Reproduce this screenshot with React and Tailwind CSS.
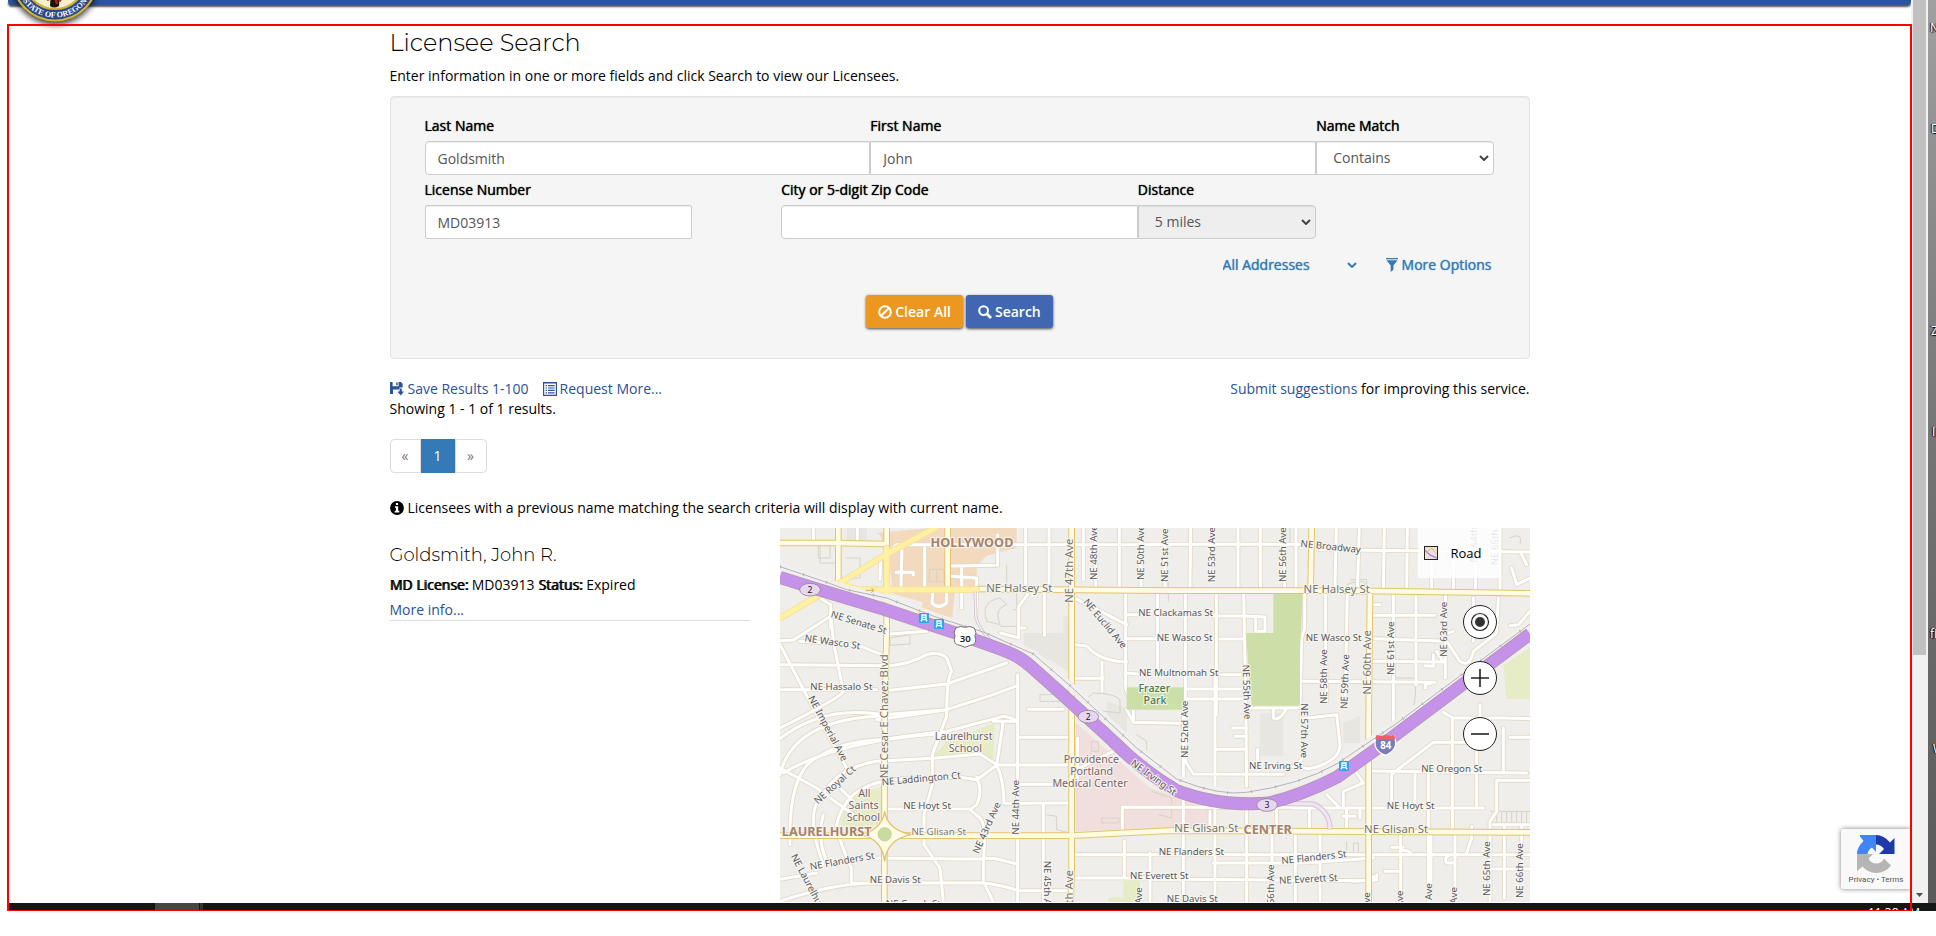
import React from "react";

const FONT = "font-['Open_Sans','Noto_Sans',sans-serif]";

/* ---------- icons ---------- */
const Chevron = ({ className }) => (
  <svg viewBox="0 0 10 6" className={className} fill="none" stroke="currentColor" strokeWidth="2">
    <path d="M1 1 L5 5 L9 1" />
  </svg>
);
const BanIcon = () => (
  <svg viewBox="0 0 14 14" className="h-[14px] w-[14px]" fill="none" stroke="currentColor" strokeWidth="2">
    <circle cx="7" cy="7" r="5.8" />
    <path d="M3.2 10.8 L10.8 3.2" />
  </svg>
);
const SearchIcon = () => (
  <svg viewBox="0 0 14 14" className="h-[14px] w-[14px]" fill="none" stroke="currentColor">
    <circle cx="5.6" cy="5.6" r="4.4" strokeWidth="2" />
    <path d="M9 9 L13 13" strokeWidth="2.8" />
  </svg>
);
const FilterIcon = () => (
  <svg viewBox="0 0 14 14" className="h-[14px] w-[14px]" fill="currentColor">
    <path d="M1 0h12v1.3H1zM1.4 2.2h11.2L8.4 7.4v4.4L5.7 14V7.4z" />
  </svg>
);
const SaveIcon = () => (
  <svg viewBox="0 0 14 14" className="h-[14px] w-[14px]" fill="currentColor">
    <path fillRule="evenodd" d="M0 0h2.6v4.2h6V0H11l1.6 1.8v3.6H9.4v2H3v4.2H0zM6.2 .6h1.5v2.6H6.2z" />
    <path d="M9.6 6.4h2.2v3.2H14L10.7 13.4 7.4 9.6h2.2z" />
    <path d="M0 11h3v1H0z" />
  </svg>
);
const ListIcon = () => (
  <svg viewBox="0 0 14 14" className="h-[14px] w-[14px]" fill="currentColor">
    <path fillRule="evenodd" d="M0 0h14v14H0zM1.2 1.6v11.2h11.6V1.6z" />
    <path d="M2.6 3h1.4v1.2H2.6zM5 3h6.6v1.2H5zM2.6 5.4h1.4v1.2H2.6zM5 5.4h6.6v1.2H5zM2.6 7.8h1.4V9H2.6zM5 7.8h6.6V9H5zM2.6 10.2h1.4v1.2H2.6zM5 10.2h6.6v1.2H5z" />
  </svg>
);
const InfoIcon = () => (
  <svg viewBox="0 0 14 14" className="h-[14px] w-[14px]">
    <circle cx="7" cy="7" r="6.9" fill="#000" />
    <path fill="#fff" d="M5.9 2h2.2v2H5.9zM4.9 5.2h3.3v4.6h1.1v1.6H4.7V9.8h1.2V6.8h-1z" />
  </svg>
);

/* ---------- state seal ---------- */
const Seal = () => (
  <svg viewBox="0 0 100 110" className="absolute left-[5px] top-[-72px] h-[110px] w-[100px]">
    <defs>
      <filter id="sealShadow" x="-20%" y="-20%" width="140%" height="140%">
        <feDropShadow dx="0" dy="3" stdDeviation="3" floodColor="#000" floodOpacity="0.8" />
      </filter>
      <path id="sealArc" d="M10.5 50 A39.5 39.5 0 0 0 89.5 50" />
    </defs>
    <circle cx="50" cy="50" r="43.5" fill="#4a4a38" filter="url(#sealShadow)" />
    <circle cx="50" cy="50" r="42.5" fill="#27498a" stroke="#d3b62f" strokeWidth="2" />
    <circle cx="50" cy="50" r="31" fill="#f7efcd" stroke="#cdb23c" strokeWidth="2.2" />
    <path d="M46 64 L55 66 L54 78 Q49 81 45 78 Z" fill="#1b1512" />
    <path d="M42 72 L50 69 L56 73 M49 66 L52 76" stroke="#b3261c" strokeWidth="2.2" fill="none" />
    <text className="font-['Liberation_Serif',serif] text-[8px] font-bold" fill="#fff" textAnchor="middle">
      <textPath href="#sealArc" startOffset="50%">STATE OF OREGON</textPath>
    </text>
  </svg>
);

/* ---------- map ---------- */
const minorRoads = [
  // north-west blocks
  "M100 0V45", "M232 0V45", "M0 158L110 150L140 160", "M302 90L300 155", "M366 52L363 180", "M348 133H400V140", "M434 60V180",
  "M320 78L350 50H1170", "M653 20V112L510 114", "M510 145L590 150V180", "M545 114V240", "M590 180V240",
  "M458 195L456 225Q475 245 500 225V195", "M737 0V180L743 200L716 235V330L662 315", "M716 300H735", "M793 195V322", "M807 0V180",
  "M910 0V155", "M947 0V180", "M1018 0V180", "M1083 0V180", "M1155 0V180",
  // Laurelhurst curves
  "M120 210L152 230V300", "M0 338L40 336L152 265", "M152 250L160 340L190 490Q180 510 0 600", "M0 410L330 413Q390 408 440 380Q480 370 500 390L515 430Q500 450 500 565L457 680V770L432 860V950L480 1020L490 1122",
  "M330 318L440 310", "M60 340L230 350L310 382", "M0 485H290", "M0 350L110 560L200 720", "M330 487L500 468L680 405", "M290 575L500 545L640 500L715 472",
  "M0 632Q130 530 310 560L500 545", "M0 740Q40 570 320 563", "M10 735Q170 640 470 618L670 565Q700 570 713 581", "M0 720L110 780L220 860",
  "M30 950Q25 730 110 690Q180 640 300 635L470 613", "M130 1010Q70 850 130 800Q170 720 290 700L470 690L600 678L650 710",
  "M140 1000Q110 930 130 860", "M214 1065V1020Q170 920 170 890Q180 840 220 800Q280 750 400 752L540 748L590 755",
  "M170 770L220 820", "M590 748Q610 790 590 830L570 845L600 870Q620 890 610 1000V1060L640 1122", "M590 755L650 712L670 580", "M650 712Q670 750 672 826L870 825",
  "M320 843H570", "M650 711H870", "M713 440V1122", "M715 628H870", "M713 769H870", "M790 830V1122", "M745 544H850", "M640 580H713",
  "M0 1054L110 1035", "M280 990L540 993L640 991L713 1008", "M220 1066L600 1064Q670 1070 713 1088H870", "M0 1120Q150 1070 260 1066",
  // centre
  "M885 211L1040 290", "M885 350L920 354Q960 400 1040 402", "M885 451H970", "M966 402V490", "M1037 195V480L1060 543V583L1200 586", "M1133 195V440",
  "M1040 260H1090", "M1040 332H1140", "M1040 435L1100 440", "M1060 583L1040 545", "M893 630V750", "M893 723L1000 670",
  "M885 980H2250", "M885 1050H1110", "M1033 940V1045", "M1027 840V905", "M1027 838H1630",
  "M1132 195V420", "M1216 195V570", "M1216 572V700L1240 738L1510 739", "M1309 195V560", "M1305 440V1122", "M1391 195L1397 500L1400 775",
  "M1300 264H1390L1455 267V310H1427V270", "M1320 333H1390", "M1320 440H1390", "M1220 513H1400", "M1220 483H1400", "M1310 664H1400", "M1357 600H1400", "M1365 625H1400", "M1433 664V710",
  "M1400 540H1560L1565 330L1574 300V195", "M1480 540V570Q1500 580 1520 540", "M1565 572L1670 560L1680 650Q1680 700 1590 722L1530 715", "M1555 715L1570 680",
  "M1637 195V380L1640 520", "M1702 195L1695 530", "M1232 0L1230 180", "M1374 0V180", "M1441 0V180", "M1548 0V180", "M1514 0V180", "M1669 0L1665 180", "M1738 0L1732 190", "M1813 0L1810 190", "M1882 0L1880 190",
  "M1110 49H1560", "M1620 65L2250 72", "M1780 230H1800", "M1780 262H1965", "M1840 195V600", "M1908 205V470", "M1780 332L2000 340L2040 400Q2070 420 2080 370L2150 315L2155 210", "M1780 400L1990 402L1970 370", "M1960 380V415L1935 413", "M1570 460L1965 463L1936 470V480", "M1996 200V450", "M2020 310L1990 320",
  "M1955 100V190", "M2020 100V190", "M2086 20V190", "M2160 0V190", "M2195 120L2210 170L2250 150", "M2225 80L2240 110", "M2080 210V340", "M2190 293L2215 290L2250 250",
  // south-east
  "M1770 729L2240 735", "M1840 735L1960 643H2110", "M1990 553L2020 570H2170L2250 572", "M2100 530V640", "M2017 570V840L2018 900", "M1835 735V830", "M1905 735V840", "M1945 735V1122", "M2090 640V840", "M2170 600V735", "M2190 628H2250",
  "M1540 840H2110", "M1700 840V900", "M1690 865H1725M1740 840V870", "M1640 800L1680 840H1780", "M1690 840V790L1750 765M1750 765L1730 735", "M2250 757H2150V850L2130 880V1122", "M1290 850V905", "M1300 1005H1570L1780 990", "M1400 840V1122", "M1490 840V900", "M1588 840V900", "M1476 920V1020", "M1546 920V1122", "M1620 920V1122",
  "M1110 1053L1780 1058V1045", "M1110 975V1122", "M1210 540V1122", "M1780 980H1890Q1895 965 1860 968", "M1835 958H1870", "M1862 920V1090", "M1953 920V1080", "M2025 920V1080", "M2010 980Q1990 990 2000 1005L2020 1005", "M2075 895V930L2060 975", "M2173 895V1110", "M2225 890V940", "M2130 1023H2250", "M2140 890H2250", "M1815 1030H1860", "M1720 1060L1790 1055V1040",
].join("");

const majorRoads = [
  "M0 45H160L320 48", "M175 0V160", "M320 0L320 300L314 573L313 1122", "M503 0V180", "M875 0V1020L872 1122",
  "M590 183L1170 188H1700L2250 196", "M1595 0L1592 188", "M1770 198L1766 573V1122", "M0 923H875L1170 908L2250 913",
].join("");

const goldRoads = ["M465 0L320 78L175 168L0 270", "M160 165L240 185H590", "M320 60V250"].join("");

const buildings = [
  "M115 50h35v40h-35z", "M200 90h40v60h-70v-30", "M448 124h44v36h-44z", "M470 124v36", "M120 55v50h60v-30", "M330 330l60-10v28l-60 4z",
  "M620 280q-20-60 40-70l20 20q-40 10-20 60z", "M700 245h20v50h-60", "M780 500h60v20h-60z", "M940 495q60 0 80 20v40l-90-10q-20-30 10-50z",
  "M680 110v60l30 10v60", "M935 640h20v30h-20z", "M965 870h52v15h-52z", "M1700 170q70-30 60 30", "M1710 155h50v40", "M1900 540q10-40 5-90h-60",
  "M2190 30q40-20 30 20", "M2250 850h-120M2150 850v35M2165 850v35M2180 850v35M2195 850v35M2210 850v35M2225 850v35M2240 850v35", "M1700 940v40h20v-35h15v40",
  "M1145 160h20v60", "M1530 0v50h20v-50", "M800 860l30 5v40l40 10", "M1070 620l30 20v70", "M1115 790l60 20v60l-40-10",
].join("");

const HWY = "M0 148L120 186L310 243L530 316L660 363Q720 385 750 413L840 493L1000 640Q1090 730 1190 788Q1310 835 1460 826Q1560 805 1670 748L1810 648L2060 460L2250 318";
const RAIL = "M0 116L140 163L200 185L320 210L470 268L610 312L760 378L870 473L1070 660L1190 753Q1320 805 1400 793Q1560 770 1670 708L1850 586L1960 503L2250 288";

// [text, x, y, rotation, kind]
const labels = [
  ["HOLLYWOOD", 576, 48, 0, "area"], ["NE Halsey St", 718, 182, 0, "big"], ["NE Senate St", 236, 285, 17, "st"], ["NE Wasco St", 157, 344, 8, "st"],
  ["NE Hassalo St", 184, 479, 0, "st"], ["NE 47th Ave", 869, 128, -90, "big"], ["NE 48th Ave", 942, 74, -90, "st"], ["NE 50th Ave", 1083, 74, -90, "st"],
  ["NE 51st Ave", 1155, 82, -90, "st"], ["NE 53rd Ave", 1297, 80, -90, "st"], ["NE 56th Ave", 1510, 80, -90, "st"], ["NE Euclid Ave", 974, 288, 50, "st"],
  ["NE Broadway", 1652, 58, 6, "st"], ["NE Halsey St", 1670, 185, 0, "big"], ["NE Clackamas St", 1187, 256, 0, "st"], ["NE Wasco St", 1214, 331, 0, "st"],
  ["NE Multnomah St", 1196, 436, 0, "st"], ["NE Wasco St", 1661, 331, 0, "st"], ["NE 55th Ave", 1398, 492, 88, "st"], ["NE 58th Ave", 1634, 446, -90, "st"],
  ["NE 59th Ave", 1697, 461, -88, "st"], ["NE 60th Ave", 1764, 403, -90, "big"], ["NE 61st Ave", 1835, 361, -90, "st"], ["NE 63rd Ave", 1993, 304, -90, "st"],
  ["NE 64th", 2082, 50, -90, "st"], ["NE 65th", 2146, 58, -90, "st"],
  ["NE 57th Ave", 1571, 608, 90, "st"], ["NE 52nd Ave", 1216, 604, -90, "st"], ["NE Imperial Ave", 142, 602, 62, "st"], ["NE Cesar E Chavez Blvd", 316, 565, -90, "big"],
  ["NE Royal Ct", 166, 772, -42, "st"], ["NE Laddington Ct", 424, 754, -5, "st"], ["NE Hoyt St", 441, 836, 0, "st"], ["NE 43rd Ave", 622, 900, -66, "st"],
  ["NE 44th Ave", 709, 838, -90, "st"], ["NE 45th Ave", 799, 1080, 90, "st"], ["NE 47th Ave", 870, 1123, -90, "big"], ["LAURELHURST", 140, 914, 0, "area"], ["NE Glisan St", 476, 914, 0, "stg"],
  ["NE Flanders St", 187, 1001, -10, "st"], ["NE Davis St", 346, 1058, 0, "st"], ["NE Laurelhurst Pl", 94, 1085, 62, "st"], ["NE Couch St", 400, 1130, 0, "st"],
  ["Laurelhurst", 551, 626, 0, "poi"], ["School", 556, 662, 0, "poi"], ["All", 253, 797, 0, "poi"], ["Saints", 251, 833, 0, "poi"], ["School", 250, 869, 0, "poi"],
  ["Providence", 934, 695, 0, "poi"], ["Portland", 935, 731, 0, "poi"], ["Medical Center", 930, 767, 0, "poi"],
  ["Frazer", 1123, 484, 0, "park"], ["Park", 1125, 520, 0, "park"], ["NE Irving St", 1120, 750, 36, "st"], ["NE Irving St", 1487, 714, 0, "st"],
  ["NE Glisan St", 1279, 904, 0, "big"], ["CENTER", 1463, 908, 0, "area"], ["NE Glisan St", 1848, 906, 0, "big"], ["NE Oregon St", 2015, 724, 0, "st"], ["NE Hoyt St", 1892, 834, 0, "st"],
  ["NE Flanders St", 1234, 974, 0, "st"], ["NE Flanders St", 1602, 990, -6, "st"], ["NE Everett St", 1138, 1046, 0, "st"], ["NE Everett St", 1585, 1055, -3, "st"], ["NE Davis St", 1237, 1115, 0, "st"],
  ["NE 65th Ave", 2121, 1022, -90, "st"], ["NE 66th Ave", 2222, 1028, -90, "st"], ["NE 56th Ave", 1474, 1092, -90, "st"], ["NE 60th Ave", 1762, 1175, -90, "st"],
  ["NE 61st Ave", 1861, 1168, -90, "st"], ["NE 62nd Ave", 1949, 1152, -90, "st"], ["NE 63rd Ave", 2022, 1160, -90, "st"], ["NE 50th Ave", 1078, 1160, -90, "st"],
];
const labelClass = {
  st: "text-[29px]",
  stg: "text-[29px]",
  big: "text-[34px]",
  area: "text-[38px] font-bold",
  poi: "text-[32px]",
  park: "text-[32px] font-medium",
};
const labelColor = { st: "#595959", stg: "#7d7d70", big: "#77766b", area: "#a5836c", poi: "#7c6565", park: "#4a7a4c" };

const Transit = ({ x, y }) => (
  <g transform={`translate(${x} ${y})`}>
    <rect x="-15" y="-15" width="30" height="30" rx="3" fill="#2fa4ee" />
    <path d="M-9 10L-6 4V-9H6V4L9 10M-6 -2H6M-6 5H6" stroke="#fff" strokeWidth="4" fill="none" />
  </g>
);
const Oval = ({ x, y, n }) => (
  <g>
    <ellipse cx={x} cy={y} rx="31" ry="19" fill="#e7d6ef" stroke="#9e7f9e" strokeWidth="2.5" />
    <text x={x} y={y + 9} textAnchor="middle" className="text-[26px]" fill="#222">{n}</text>
  </g>
);

const MapDrawing = () => (
  <svg viewBox="0 0 2250 1122" className="block h-auto w-full font-['Noto_Sans','Open_Sans',sans-serif]" role="img" aria-label="Road map">
    <rect width="2250" height="1122" fill="#efeeeb" />
    <g fill="#e8e6e0">
      <path d="M730 315h120v-50h20v170l-60-40h-50l-30-40zM1440 555h70v130h-70zM1690 585l50-20v80h-50zM980 520l60 20v80l-60-20zM200 0h60v40h-60z" />
    </g>
    <path d="M290 15L450 0H710V60L620 83L590 113V180L525 190L515 283L420 248L430 223L340 198L330 123L300 20Z" fill="#f3d9be" />
    <path d="M885 583L1110 780L1300 843V898L1170 903L885 910Z" fill="#f0dfdd" />
    <g fill="#e6ecc5">
      <path d="M500 640L645 585L640 698L590 678L460 683Z" />
      <path d="M220 798L305 778V883L270 898L180 893L195 843Z" />
      <path d="M2250 358L2170 413L2180 513H2250Z" />
      <path d="M1030 1058H1080V1122H985V1108H1030Z" />
    </g>
    <path d={buildings} fill="none" stroke="#d8d2c6" strokeWidth="3" />
    <path d={minorRoads} fill="none" stroke="#e3d9c5" strokeWidth="14" strokeLinejoin="round" strokeLinecap="round" />
    <path d={minorRoads} fill="none" stroke="#fff" strokeWidth="9" strokeLinejoin="round" strokeLinecap="round" />
    <g fill="#cddfa8">
      <path d="M1480 198H1568L1560 373L1560 533H1415L1402 373L1397 315H1480Z" />
      <path d="M1040 478H1212V545H1040Z" />
    </g>
    <path d={majorRoads} fill="none" stroke="#e3c46c" strokeWidth="20" strokeLinejoin="round" />
    <path d={majorRoads} fill="none" stroke="#fffbe4" strokeWidth="14" strokeLinejoin="round" />
    <path d={goldRoads} fill="none" stroke="#f6dfa0" strokeWidth="20" strokeLinejoin="round" strokeLinecap="round" />
    <path d={goldRoads} fill="none" stroke="#fff0a2" strokeWidth="15" strokeLinejoin="round" strokeLinecap="round" />
    <path d="M314 850Q322 905 395 920Q322 932 314 1000Q306 932 240 920Q306 905 314 850Z" fill="#fffbe4" stroke="#e3c46c" strokeWidth="4" />
    <circle cx="314" cy="919" r="20" fill="#c8dba0" stroke="#b9c78c" strokeWidth="2" />
    <path d={RAIL} fill="none" stroke="#f1f0ee" strokeWidth="24" />
    <path d="M1480 826L1600 828Q1650 850 1650 905" fill="none" stroke="#d9c7df" strokeWidth="16" />
    <path d="M1480 826L1600 828Q1650 850 1650 905" fill="none" stroke="#f0e6ee" strokeWidth="9" />
    <path d="M585 190L588 270Q600 310 640 345" fill="none" stroke="#cdbcc9" strokeWidth="9" />
    <path d="M585 190L588 270Q600 310 640 345" fill="none" stroke="#f3eef0" strokeWidth="5" />
    <path d={HWY} fill="none" stroke="#b795b4" strokeWidth="39" />
    <path d={HWY} fill="none" stroke="#c492e8" strokeWidth="34" />
    <path d={RAIL} fill="none" stroke="#b4b2b6" strokeWidth="3" />
    <path d={RAIL} fill="none" stroke="#b4b2b6" strokeWidth="9" strokeDasharray="3 70" />
    <path d="M257 187h24M274 180l8 7l-8 7" fill="none" stroke="#dba94b" strokeWidth="3" />
    {labels.map(([t, x, y, r, k], i) => (
      <text
        key={i}
        transform={`translate(${x} ${y}) rotate(${r})`}
        textAnchor="middle"
        dominantBaseline="middle"
        className={labelClass[k]}
        fill={labelColor[k]}
        stroke="#f7f6f3"
        strokeOpacity="0.85"
        strokeWidth="7"
        strokeLinejoin="round"
        paintOrder="stroke"
      >
        {t}
      </text>
    ))}
    <Transit x={432} y={270} />
    <Transit x={477} y={288} />
    <Transit x={1692} y={714} />
    <Oval x={90} y={185} n="2" />
    <Oval x={925} y={566} n="2" />
    <Oval x={1461} y={831} n="3" />
    <path d="M527 300Q540 292 555 298Q570 292 583 300L588 315Q582 322 587 335Q588 350 570 352L555 358L540 352Q522 350 523 335Q528 322 522 315Z" fill="#fff" stroke="#77706f" strokeWidth="3" />
    <text x="556" y="341" textAnchor="middle" className="text-[29px] font-semibold" fill="#222">30</text>
    <path d="M1790 623Q1816 632 1842 623Q1860 665 1816 682Q1772 665 1790 623Z" fill="#7d7cb8" stroke="#fff" strokeWidth="4" />
    <path d="M1790 620Q1803 626 1816 620Q1829 626 1842 620L1847 634H1785Z" fill="#f4605f" />
    <text x="1817" y="664" textAnchor="middle" className="text-[29px] font-bold" fill="#fff">84</text>
  </svg>
);

const mapButton =
  "absolute right-[33px] flex h-[34px] w-[34px] items-center justify-center rounded-full border border-[#222] bg-white";

/* ---------- form pieces ---------- */
const labelCls = "block text-sm leading-5 text-black [text-shadow:0_0_1px_currentColor]";
const inputCls =
  "mt-[5px] block h-[34px] w-full border border-[#ccc] bg-white px-3 text-sm text-[#555] shadow-[inset_0_1px_1px_rgba(0,0,0,0.075)] outline-none";
const btnCls =
  "flex h-[33px] items-center gap-[3px] rounded-[3px] px-3 text-sm font-semibold text-white shadow-[0_1px_3px_rgba(0,0,0,0.7)]";

const SearchForm = () => (
  <form
    onSubmit={(e) => e.preventDefault()}
    className="mt-[10px] rounded border border-[#e3e3e3] bg-[#f5f5f5] px-[34px] pt-[19px] pb-[30px] shadow-[inset_0_1px_1px_rgba(0,0,0,0.05)]"
  >
    <div className="grid grid-cols-12">
      <div className="col-span-5">
        <label htmlFor="last" className={labelCls}>Last Name</label>
        <input id="last" defaultValue="Goldsmith" className={`${inputCls} rounded-l`} />
      </div>
      <div className="col-span-5">
        <label htmlFor="first" className={labelCls}>First Name</label>
        <input id="first" defaultValue="John" className={inputCls} />
      </div>
      <div className="col-span-2">
        <label htmlFor="match" className={labelCls}>Name Match</label>
        <div className="relative">
          <select id="match" className={`${inputCls} appearance-none rounded-r pl-4`}>
            <option>Contains</option>
          </select>
          <Chevron className="pointer-events-none absolute top-[14px] right-[5px] h-[6px] w-[10px] text-[#444]" />
        </div>
      </div>
    </div>
    <div className="mt-[5px] grid grid-cols-12">
      <div className="col-span-3">
        <label htmlFor="license" className={labelCls}>License Number</label>
        <input id="license" defaultValue="MD03913" className={`${inputCls} rounded-[2px]`} />
      </div>
      <div className="col-span-4 col-start-5">
        <label htmlFor="city" className={labelCls}>City or 5-digit Zip Code</label>
        <input id="city" className={`${inputCls} rounded-l`} />
      </div>
      <div className="col-span-2">
        <label htmlFor="distance" className={labelCls}>Distance</label>
        <div className="relative">
          <select id="distance" disabled className="mt-[5px] block h-[34px] w-full appearance-none rounded-r border border-[#ccc] bg-[#eee] px-4 text-sm text-[#555] opacity-100 shadow-[inset_0_1px_1px_rgba(0,0,0,0.075)]">
            <option>5 miles</option>
          </select>
          <Chevron className="pointer-events-none absolute top-[14px] right-[5px] h-[6px] w-[10px] text-[#444]" />
        </div>
      </div>
    </div>
    <div className="mt-4 flex items-center justify-end gap-7 pr-[3px] text-sm leading-5 text-[#337ab7]">
      <div className="relative">
        <select aria-label="Address type" className="block w-[134px] appearance-none bg-transparent outline-none [text-shadow:0_0_1px_currentColor]">
          <option>All Addresses</option>
        </select>
        <Chevron className="pointer-events-none absolute top-[7px] right-0 h-[6px] w-[10px]" />
      </div>
      <button type="button" className="flex items-center gap-[3px] [text-shadow:0_0_1px_currentColor]">
        <FilterIcon />
        More Options
      </button>
    </div>
    <div className="mt-5 flex justify-center gap-[3px]">
      <button type="reset" className={`${btnCls} bg-[#ec971f]`}>
        <BanIcon />
        Clear All
      </button>
      <button type="submit" className={`${btnCls} bg-[#4267b2]`}>
        <SearchIcon />
        Search
      </button>
    </div>
  </form>
);

const Recaptcha = () => (
  <div className="absolute right-0 bottom-[14px] flex h-[60px] w-[70px] flex-col items-center rounded-l-[2px] bg-[#f9f9f9] pt-[6px] shadow-[0_0_5px_rgba(0,0,0,0.5)]">
    <svg viewBox="0 0 38 38" className="h-[38px] w-[38px]">
      <path d="M19 0Q27 0 33 7.5L37.5 3V19H22L27 14Q24 9.500 19 9.500Z" fill="#1c3aa9" />
      <path d="M19 0V17L15 12.5Q11 15 10.500 19H0Q0 12 6.500 6L3 1.500V0Z" fill="#4285f4" />
      <path d="M0 19H16L11.500 23.500Q14 28.500 19.500 28.500Q24.500 28.500 27 23.500L34 30.500Q28 38 19 38Q11 38 5.500 31.500L0 36Z" fill="#b5b5b5" />
    </svg>
    <p className="font-['Roboto',sans-serif] text-[8px] leading-[14px] whitespace-nowrap text-[#555]">
      <a href="#privacy">Privacy</a> • <a href="#terms">Terms</a>
    </p>
  </div>
);

const link = "text-[#2a5298]";
const strongCls = "font-normal [text-shadow:1px_0_0_currentColor]";

export default function App() {
  return (
    <div className={`${FONT} relative min-h-screen overflow-hidden bg-white text-sm leading-5 text-black`}>
      <div className="flex h-[calc(100vh-33px)]">
        <main className="relative flex flex-1 flex-col overflow-hidden pl-2">
          <header className="h-[5px] shrink-0 rounded-b bg-[#2c549c] shadow-[0_2px_2px_#555]" />
          <div className="mx-auto w-full max-w-[1140px] pt-[25px]">
            <h1 className="font-['Montserrat','Inter',sans-serif] text-2xl leading-[26px] font-light">Licensee Search</h1>
            <p className="mt-[10px]">Enter information in one or more fields and click Search to view our Licensees.</p>
            <SearchForm />
            <div className="mt-5 flex justify-between">
              <div className="flex gap-[14px]">
                <a href="#save" className={`${link} flex items-center gap-1`}><SaveIcon />Save Results 1-100</a>
                <a href="#request" className={`${link} flex items-center gap-[3px]`}><ListIcon />Request More...</a>
              </div>
              <p><a href="#suggest" className={link}>Submit suggestions</a> for improving this service.</p>
            </div>
            <p>Showing 1 - 1 of 1 results.</p>
            <nav aria-label="Results pages" className="mt-5 flex h-[34px]">
              <a href="#prev" className="flex w-[31px] items-center justify-center rounded-l border border-[#ddd] text-[#777]">«</a>
              <a href="#1" className="flex w-[34px] items-center justify-center bg-[#337ab7] text-white">1</a>
              <a href="#next" className="flex w-8 items-center justify-center rounded-r border border-[#ddd] text-[#777]">»</a>
            </nav>
            <p className="mt-[25px] flex items-center gap-1">
              <InfoIcon />
              Licensees with a previous name matching the search criteria will display with current name.
            </p>
            <div className="mt-[10px] flex items-start gap-[30px]">
              <section className="min-w-0 flex-1 border-b border-[#ddd] pt-[17px]">
                <h2 className="font-['Montserrat','Inter',sans-serif] text-lg leading-5 font-light">Goldsmith, John R.</h2>
                <p className="mt-[10px]"><b className={strongCls}>MD License:</b> MD03913 <b className={strongCls}>Status:</b> Expired</p>
                <a href="#more" className={`${link} mt-[5px] block`}>More info...</a>
              </section>
              <div className="relative w-[750px] shrink-0">
                <MapDrawing />
                <button type="button" className="absolute top-0 right-[30px] flex h-[50px] w-[82px] items-center gap-[13px] bg-white/85 pl-[6px] text-[13px]">
                  <svg viewBox="0 0 14 14" className="h-[14px] w-[14px]">
                    <rect x="0.500" y="0.500" width="13" height="13" fill="#e9e4da" stroke="#222" />
                    <path d="M1 4L6 9L13 12" stroke="#b98be0" strokeWidth="1.500" fill="none" />
                    <path d="M2 7L8 2L12 8" stroke="#f0b068" strokeWidth="1" fill="none" />
                  </svg>
                  Road
                </button>
                <button type="button" aria-label="Locate me" className={`${mapButton} top-[77px]`}>
                  <svg viewBox="0 0 20 20" className="h-5 w-5 shrink-0"><circle cx="10" cy="10" r="8.500" fill="none" stroke="#222" strokeWidth="1.200" /><circle cx="10" cy="10" r="5" fill="#333" /></svg>
                </button>
                <button type="button" aria-label="Zoom in" className={`${mapButton} top-[133px]`}>
                  <svg viewBox="0 0 20 20" className="h-5 w-5 shrink-0"><path d="M1 10H19M10 1V19" stroke="#222" strokeWidth="1.600" /></svg>
                </button>
                <button type="button" aria-label="Zoom out" className={`${mapButton} top-[189px]`}>
                  <svg viewBox="0 0 20 20" className="h-5 w-5 shrink-0"><path d="M1 10H19" stroke="#222" strokeWidth="1.600" /></svg>
                </button>
              </div>
            </div>
          </div>
          <Seal />
          <Recaptcha />
        </main>
        <div className="flex w-[17px] shrink-0 flex-col items-center justify-between bg-[#f1f1f1] pb-[6px]">
          <div className="h-[73%] w-[13px] bg-[#c1c1c1]" />
          <svg viewBox="0 0 7 4" className="h-1 w-[7px]"><path d="M0 0H7L3.500 4Z" fill="#505050" /></svg>
        </div>
        <aside className="relative w-2 shrink-0 overflow-hidden bg-linear-to-b from-[#a0a0a0] via-[#747474] to-[#5a5a59] text-xs text-white [text-shadow:1px_1px_1px_#000,-1px_0_1px_#000]">
          <span className="absolute top-5 left-[2px]">N</span>
          <span className="absolute top-[121px] left-[3px]">D</span>
          <span className="absolute top-[323px] left-[3px]">Z</span>
          <span className="absolute top-[424px] left-[4px]">I</span>
          <span className="absolute top-[626px] left-[2px]">fi</span>
          <span className="absolute top-[741px] left-[5px]">W</span>
        </aside>
      </div>
      <footer className="ml-[9px] flex h-2 overflow-hidden bg-[#151716]">
        <div className="ml-[146px] h-full w-[44px] bg-[#454745]" />
        <div className="ml-px h-full w-[3px] bg-[#353735]" />
        <span className="mt-[2px] mr-4 ml-auto text-xs text-white">11:38 AM</span>
      </footer>
      <div className="pointer-events-none absolute top-6 right-6 bottom-[25px] left-[7px] border-2 border-b border-[#ff0000]" />
    </div>
  );
}
